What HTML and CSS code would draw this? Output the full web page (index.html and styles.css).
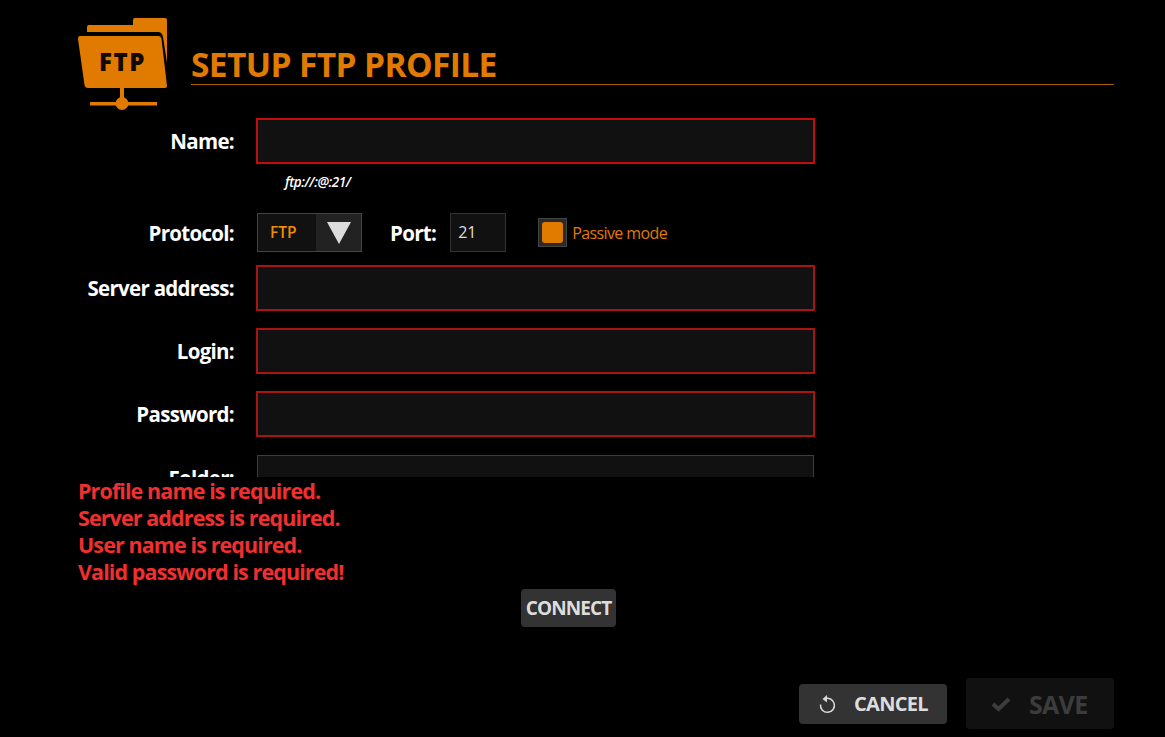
FILE: index.html
```html
<!DOCTYPE html>
<html lang="en">
<head>
<meta charset="utf-8">
<title>Setup FTP Profile</title>
<link rel="stylesheet" href="styles.css">
</head>
<body>
<div class="page">
  <header class="header">
    <svg class="logo" width="90" height="93" viewBox="0 0 90 93">
      <path d="M9 15 V10 Q9 8 11 8 H55 V3 Q55 1 57 1 H87 Q89 1 89 3 V46 L85 20 Q84 15 80 15 Z" fill="#e07b00"/>
      <path d="M2 19 H80 Q83 19 83.500 22 L89 69 Q89 71 87 71 H10 Q7 71 6.500 68 L0 22 Q0 19 2 19 Z" fill="#e07b00"/>
      <rect x="42" y="70" width="4" height="16" fill="#e07b00"/>
      <rect x="12" y="85" width="67" height="3.500" fill="#e07b00"/>
      <circle cx="44" cy="86.500" r="6.500" fill="#e07b00"/>
      <text x="44.500" y="54" class="logo-text" text-anchor="middle">FTP</text>
    </svg>
    <h1 class="title">SETUP FTP PROFILE</h1>
  </header>
  <div class="form">
    <div class="row row-name">
      <label class="label">Name:</label>
      <div class="input invalid focused"></div>
    </div>
    <div class="hint">ftp://:@:21/</div>
    <div class="row row-protocol">
      <label class="label">Protocol:</label>
      <div class="select">
        <span class="select-value">FTP</span>
        <span class="select-arrow"><svg width="24" height="22" viewBox="0 0 24 22"><path d="M0 0 H24 L12 22 Z" fill="#dcdcdc"/></svg></span>
      </div>
      <label class="label-inline">Port:</label>
      <div class="port">21</div>
      <div class="check"><span class="check-fill"></span></div>
      <span class="check-label">Passive mode</span>
    </div>
    <div class="row">
      <label class="label">Server address:</label>
      <div class="input invalid"></div>
    </div>
    <div class="row">
      <label class="label">Login:</label>
      <div class="input invalid"></div>
    </div>
    <div class="row row-password">
      <label class="label">Password:</label>
      <div class="input invalid"></div>
    </div>
    <div class="row">
      <label class="label">Folder:</label>
      <div class="input input-plain"></div>
    </div>
  </div>
  <div class="errors">
    <div>Profile name is required.</div>
    <div>Server address is required.</div>
    <div>User name is required.</div>
    <div>Valid password is required!</div>
  </div>
  <div class="connect-wrap"><button class="connect">CONNECT</button></div>
  <footer class="footer">
    <button class="btn btn-cancel">
      <svg width="20" height="20" viewBox="0 0 20 20"><path d="M7.500 5 A7 7 0 1 1 3.500 10.500" transform="translate(0 0)" fill="none" stroke="#d8d8d8" stroke-width="1.500"/><path d="M10 1 L5.500 5 L10 8.500 Z" fill="#d8d8d8"/></svg>
      <span>CANCEL</span>
    </button>
    <button class="btn btn-save">
      <svg width="20" height="16" viewBox="0 0 20 16"><path d="M2 8 L7.500 13 L18 3" fill="none" stroke="#3c3c3c" stroke-width="4"/></svg>
      <span>SAVE</span>
    </button>
  </footer>
</div>
</body>
</html>
```

FILE: styles.css
```css
* { box-sizing: border-box; }
html, body { margin: 0; height: 100%; background: #000; overflow: hidden; }
body { font-family: "Open Sans", "Noto Sans", sans-serif; color: #fff; }
.page { width: 1165px; height: 737px; padding: 17px 51px 0 78px; display: flex; flex-direction: column; }
.header { display: flex; align-items: flex-start; height: 101px; flex: none; }
.logo { flex: none; margin-right: 23px; }
.logo-text { font: 800 24px "Open Sans", sans-serif; fill: #120a00; letter-spacing: 1.500px; }
.title { flex: 1; margin: 28px 0 0; height: 40px; border-bottom: 1px solid #a85c00; color: #e07b00; font-size: 33.500px; line-height: 38px; font-weight: 700; letter-spacing: -.62px; }
.form { height: 359px; overflow: hidden; flex: none; }
.row { display: flex; align-items: center; height: 46px; margin-bottom: 17px; }
.row-name { margin-bottom: 0; }
.row-password { margin-bottom: 18px; }
.label { width: 156px; text-align: right; font-size: 20.500px; font-weight: 700; letter-spacing: -.7px; margin-right: 23px; flex: none; line-height: 48px; }
.input { width: 559px; height: 46px; margin-left: -1px; background: #111; border: 1px solid #3c3c3c; flex: none; }
.input-plain { width: 557px; margin-left: 0; }
.invalid { border: 2px solid #a81414; }
.focused { border-color: #c40c0c; }
.hint { margin: 10px 0 0 207px; height: 39px; font-size: 13.500px; line-height: 16px; font-style: italic; font-weight: 600; letter-spacing: -.4px; }
.row-protocol { height: 39px; margin-bottom: 13px; }
.select { width: 105px; height: 39px; display: flex; background: #111; border: 1px solid #444; flex: none; }
.select-value { width: 58px; padding-left: 12px; font-size: 15.500px; line-height: 37px; font-weight: 600; color: #f08c00; letter-spacing: 0; }
.select-arrow { flex: 1; background: #222; display: flex; align-items: center; justify-content: center; }
.label-inline { font-size: 20.500px; font-weight: 700; letter-spacing: -.7px; margin: 0 14px 0 28px; }
.port { width: 56px; height: 39px; background: #111; border: 1px solid #333; font-size: 16px; line-height: 37px; padding-left: 7px; color: #ddd; flex: none; }
.check { width: 29px; height: 29px; margin-left: 32px; background: #2a2a2a; border: 1px solid #444; padding: 3px; flex: none; }
.check-fill { display: block; width: 100%; height: 100%; background: #e07b00; border-radius: 3px; }
.check-label { margin-left: 5px; color: #e07b00; font-size: 16px; letter-spacing: -.6px; }
.errors { color: #f22f2f; font-size: 21.500px; font-weight: 700; line-height: 27px; letter-spacing: -.9px; flex: none; }
.connect-wrap { height: 38px; margin-top: 4px; padding-left: 443px; flex: none; }
button { font-family: inherit; border: 0; padding: 0; }
.connect { width: 95px; height: 38px; background: #333; color: #ddd; border-radius: 4px; font-size: 19px; font-weight: 700; letter-spacing: -.9px; }
.footer { display: flex; justify-content: flex-end; align-items: center; gap: 19px; margin-top: 51px; height: 51px; flex: none; }
.btn { width: 148px; display: flex; align-items: center; border-radius: 4px; font-size: 20px; font-weight: 700; letter-spacing: -.7px; }
.btn-cancel { height: 40px; background: #333; color: #ddd; padding-left: 18px; gap: 17px; }
.btn-save { height: 51px; background: #111; color: #3c3c3c; padding-left: 25px; gap: 18px; font-size: 25px; }
```
